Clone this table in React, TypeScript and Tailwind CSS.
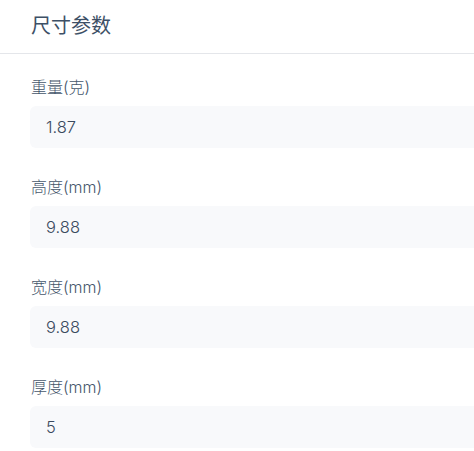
const fields = [
  { label: "重量(克)", value: "1.87" },
  { label: "高度(mm)", value: "9.88" },
  { label: "宽度(mm)", value: "9.88" },
  { label: "厚度(mm)", value: "5" },
];

export default function App() {
  return (
    <div
      className="w-[474px] h-[451px] overflow-hidden bg-white"
      style={{ fontFamily: 'Inter, "Noto Sans CJK SC", sans-serif' }}
    >
      <div className="h-[54px] border-b border-[#e4e6ea] pl-[31px] flex items-center">
        <h2 className="text-[20px] leading-[28px] text-[#3d5066] -mt-[2px]">尺寸参数</h2>
      </div>
      <div className="pl-[30px] pt-[21px] flex flex-col gap-[27px]">
        {fields.map((f) => (
          <div key={f.label} className="flex flex-col">
            <label className="text-[16px] leading-[24px] text-[#45566b] pl-[1px] mb-[7px] font-light">{f.label}</label>
            <div className="w-[480px] h-[42px] rounded-[6px] bg-[#f8f9fb] flex items-center pl-[16px] text-[16.5px] text-[#3a4a5e] font-light">
              {f.value}
            </div>
          </div>
        ))}
      </div>
    </div>
  );
}
